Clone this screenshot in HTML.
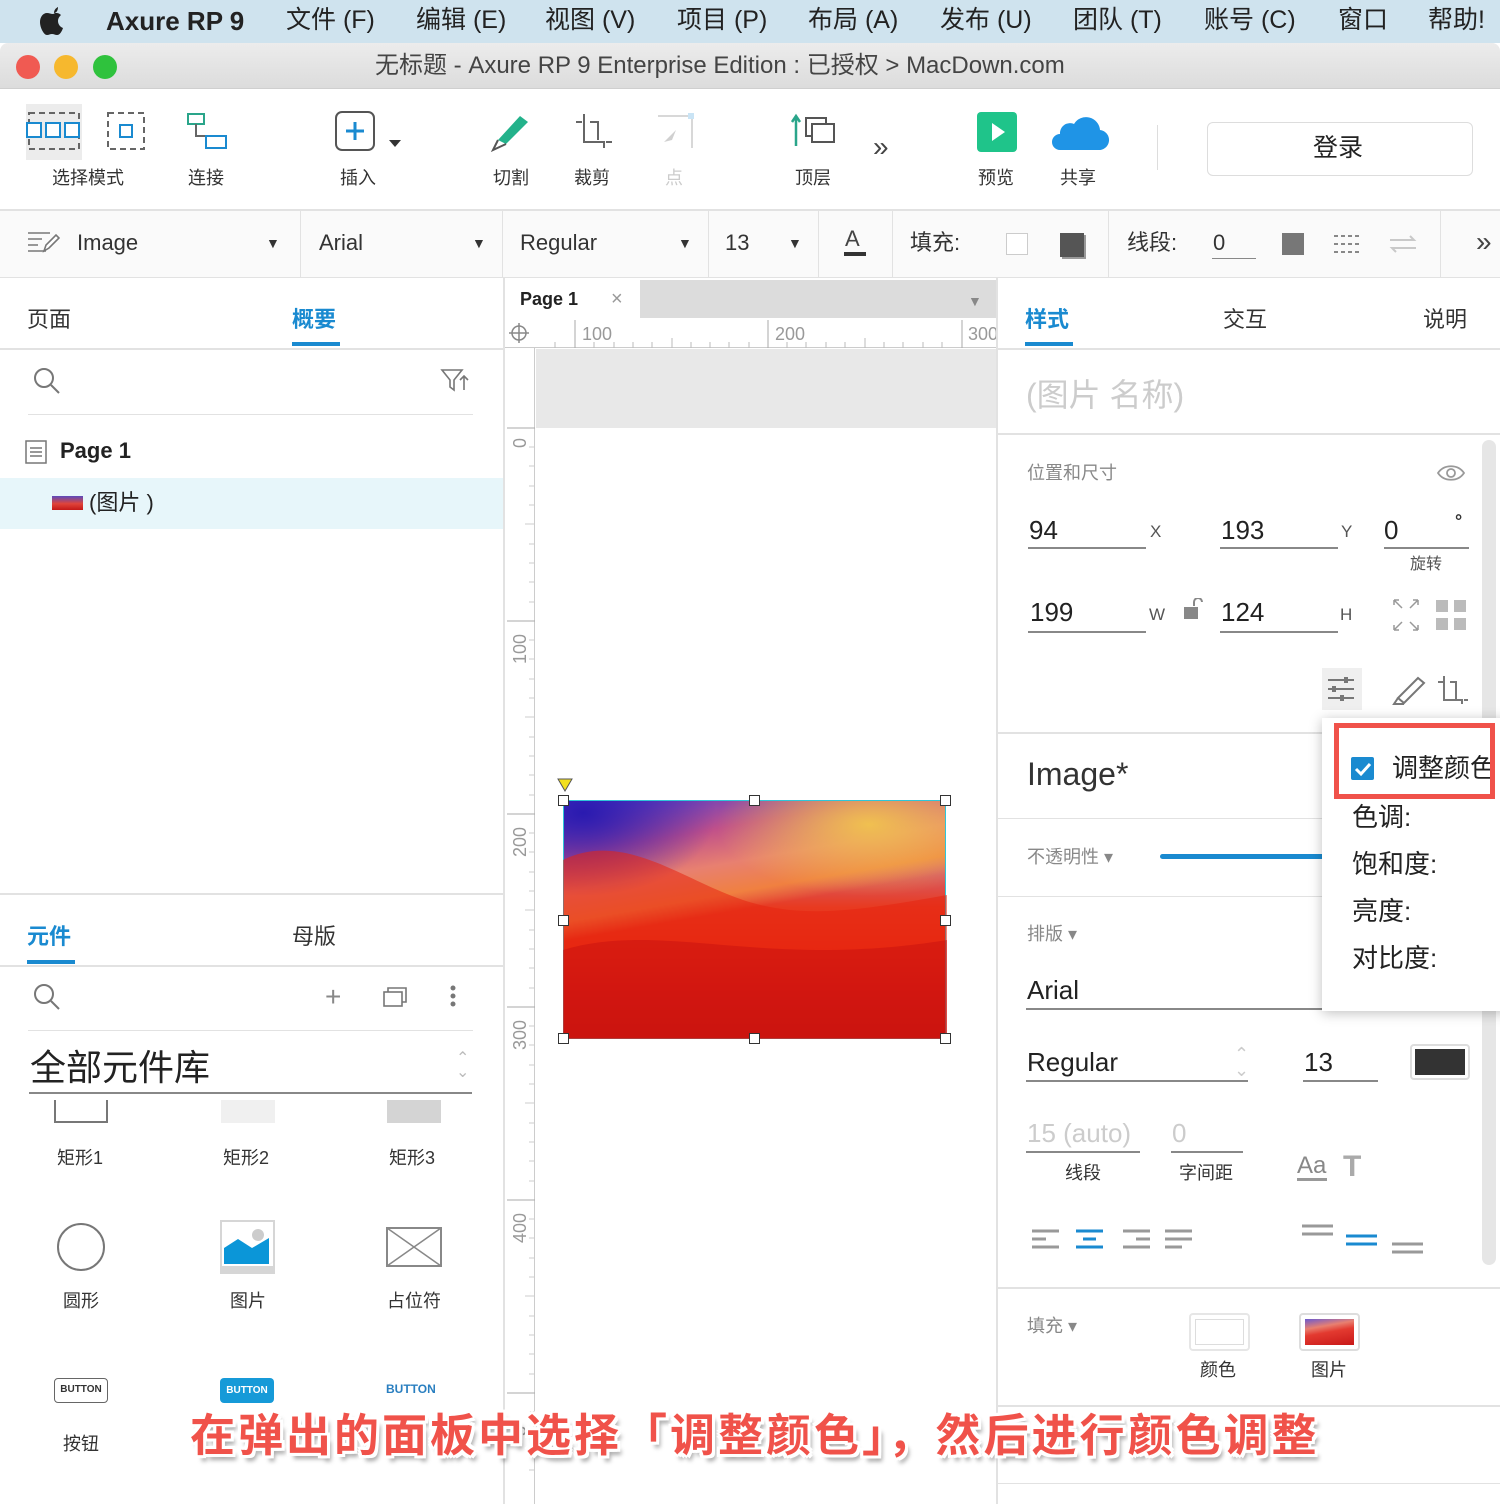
<!DOCTYPE html>
<html><head><meta charset="utf-8"><style>
*{margin:0;padding:0;box-sizing:border-box}
body{width:1500px;height:1504px;position:relative;overflow:hidden;background:#fff;font-family:"Liberation Sans","Noto Sans CJK SC",sans-serif;color:#333}
.a{position:absolute}
.t{position:absolute;white-space:nowrap;line-height:1}
.ln{position:absolute;background:#e2e2e2}
.ul{position:absolute;height:2px;background:#888}
</style></head><body>
<!-- menu bar -->
<div class="a" style="left:0;top:0;width:1500px;height:43px;background:#cfe3ee"></div>
<svg class="a" style="left:38px;top:5px" width="30" height="32" viewBox="0 0 30 32"><path d="M20 2c-2 1-4 3-4 6 2 0 4-2 4-6zM15 9c-2 0-4-1-6-1-4 0-7 4-7 9 0 6 4 13 7 13 2 0 3-1 5-1s3 1 5 1c3 0 5-4 6-7-3-1-5-4-5-7 0-3 2-5 3-6-2-2-4-2-5-2-2 0-2 1-3 1z" fill="#222"/></svg>
<div class="t" style="left:106px;top:8px;font-size:26px;font-weight:bold;color:#222">Axure RP 9</div>
<div class="t" style="left:286px;top:8px;font-size:25px;color:#222;word-spacing:0">文件 (F)</div>
<div class="t" style="left:416px;top:8px;font-size:25px;color:#222">编辑 (E)</div>
<div class="t" style="left:545px;top:8px;font-size:25px;color:#222">视图 (V)</div>
<div class="t" style="left:677px;top:8px;font-size:25px;color:#222">项目 (P)</div>
<div class="t" style="left:808px;top:8px;font-size:25px;color:#222">布局 (A)</div>
<div class="t" style="left:940px;top:8px;font-size:25px;color:#222">发布 (U)</div>
<div class="t" style="left:1073px;top:8px;font-size:25px;color:#222">团队 (T)</div>
<div class="t" style="left:1204px;top:8px;font-size:25px;color:#222">账号 (C)</div>
<div class="t" style="left:1338px;top:8px;font-size:25px;color:#222">窗口</div>
<div class="t" style="left:1428px;top:8px;font-size:25px;color:#222">帮助!</div>
<!-- title bar -->
<div class="a" style="left:0;top:43px;width:1500px;height:46px;background:linear-gradient(#ececec,#dcdcdc);border-bottom:1px solid #cfcfcf;border-radius:8px 8px 0 0"></div>
<div class="a" style="left:16px;top:55px;width:24px;height:24px;border-radius:50%;background:#f05a52"></div>
<div class="a" style="left:54px;top:55px;width:24px;height:24px;border-radius:50%;background:#f6b82e"></div>
<div class="a" style="left:93px;top:55px;width:24px;height:24px;border-radius:50%;background:#2fc23d"></div>
<div class="t" style="left:375px;top:54px;font-size:24px;color:#444">无标题 - Axure RP 9 Enterprise Edition : 已授权 &gt; MacDown.com</div>
<!-- toolbar -->
<div class="a" style="left:26px;top:104px;width:56px;height:56px;background:#ececec"></div>
<svg class="a" style="left:26px;top:110px" width="56" height="42"><rect x="3" y="3" width="50" height="36" fill="none" stroke="#666" stroke-width="2" stroke-dasharray="6 4"/><rect x="1" y="13" width="14" height="14" fill="#fff" stroke="#1a8ad0" stroke-width="2"/><rect x="20" y="13" width="14" height="14" fill="#fff" stroke="#1a8ad0" stroke-width="2"/><rect x="39" y="13" width="14" height="14" fill="#fff" stroke="#1a8ad0" stroke-width="2"/></svg>
<svg class="a" style="left:106px;top:110px" width="40" height="42"><rect x="2" y="3" width="36" height="36" fill="none" stroke="#666" stroke-width="2" stroke-dasharray="6 4"/><rect x="14" y="15" width="12" height="12" fill="none" stroke="#1a8ad0" stroke-width="2"/></svg>
<svg class="a" style="left:186px;top:112px" width="44" height="40"><rect x="2" y="2" width="16" height="10" fill="none" stroke="#2aa58a" stroke-width="2"/><path d="M10 12v12h14" fill="none" stroke="#666" stroke-width="2"/><rect x="20" y="24" width="20" height="12" fill="none" stroke="#1a8ad0" stroke-width="2"/></svg>
<div class="t" style="left:52px;top:169px;font-size:18px">选择模式</div>
<div class="t" style="left:188px;top:169px;font-size:18px">连接</div>
<svg class="a" style="left:334px;top:110px" width="70" height="44"><rect x="2" y="2" width="38" height="38" rx="6" fill="none" stroke="#555" stroke-width="2"/><path d="M21 12v18M12 21h18" stroke="#1a8ad0" stroke-width="3"/><path d="M55 30h12l-6 7z" fill="#333"/></svg>
<div class="t" style="left:340px;top:169px;font-size:18px">插入</div>
<svg class="a" style="left:490px;top:112px" width="44" height="40"><path d="M8 28 30 4l8 6-22 22z" fill="#23b28b"/><path d="M8 28l-5 10 13-6" fill="none" stroke="#555" stroke-width="2"/></svg>
<svg class="a" style="left:572px;top:112px" width="44" height="40"><path d="M12 2v28h20v6M4 10h6M18 10h8v18M34 30h6" fill="none" stroke="#666" stroke-width="2"/></svg>
<svg class="a" style="left:654px;top:112px" width="44" height="40" opacity=".45"><path d="M4 4h34v32" fill="none" stroke="#aaa" stroke-width="2"/><rect x="34" y="1" width="6" height="6" fill="#8cc4ea"/><path d="M10 30l12-12-4 10z" fill="#999"/></svg>
<div class="t" style="left:493px;top:169px;font-size:18px">切割</div>
<div class="t" style="left:574px;top:169px;font-size:18px">裁剪</div>
<div class="t" style="left:665px;top:169px;font-size:18px;color:#ccc">点</div>
<svg class="a" style="left:790px;top:112px" width="48" height="40"><path d="M6 4v30M2 10l4-6 4 6" fill="none" stroke="#2aa58a" stroke-width="2.5"/><rect x="16" y="6" width="20" height="18" fill="#fff" stroke="#555" stroke-width="2"/><rect x="22" y="12" width="22" height="18" fill="#fff" stroke="#555" stroke-width="2"/></svg>
<div class="t" style="left:795px;top:169px;font-size:18px">顶层</div>
<div class="t" style="left:873px;top:133px;font-size:28px;color:#444">»</div>
<div class="a" style="left:977px;top:112px;width:40px;height:40px;border-radius:4px;background:#1fc48a"></div>
<svg class="a" style="left:990px;top:122px" width="16" height="20"><path d="M2 1l13 9-13 9z" fill="#fff"/></svg>
<svg class="a" style="left:1046px;top:110px" width="64" height="44"><path d="M14 40h38a10 10 0 0 0 2-20 14 14 0 0 0-26-6 10 10 0 0 0-14 10 8 8 0 0 0 0 16z" fill="#1f94e6"/></svg>
<div class="t" style="left:978px;top:169px;font-size:18px">预览</div>
<div class="t" style="left:1060px;top:169px;font-size:18px">共享</div>
<div class="a" style="left:1157px;top:125px;width:1px;height:45px;background:#ddd"></div>
<div class="a" style="left:1207px;top:122px;width:266px;height:54px;border:1px solid #ddd;border-radius:6px"></div>
<div class="t" style="left:1313px;top:136px;font-size:25px;color:#222">登录</div>
<!-- format bar -->
<div class="ln" style="left:0;top:209px;width:1500px;height:2px"></div>
<div class="a" style="left:0;top:211px;width:1500px;height:67px;background:#fafafa"></div>
<div class="ln" style="left:0;top:277px;width:1500px;height:1px"></div>
<svg class="a" style="left:26px;top:229px" width="34" height="28"><path d="M2 4h22M2 10h14M2 16h10M2 22h18" stroke="#777" stroke-width="1.6"/><path d="M18 22l2-6 10-10 3 3-10 10z" fill="#fff" stroke="#777" stroke-width="1.6"/></svg>
<div class="t" style="left:77px;top:232px;font-size:22px">Image</div>
<div class="t" style="left:266px;top:236px;font-size:14px">▼</div>
<div class="a" style="left:300px;top:211px;width:1px;height:66px;background:#e2e2e2"></div>
<div class="t" style="left:319px;top:232px;font-size:22px">Arial</div>
<div class="t" style="left:472px;top:236px;font-size:14px">▼</div>
<div class="a" style="left:502px;top:211px;width:1px;height:66px;background:#e2e2e2"></div>
<div class="t" style="left:520px;top:232px;font-size:22px">Regular</div>
<div class="t" style="left:678px;top:236px;font-size:14px">▼</div>
<div class="a" style="left:708px;top:211px;width:1px;height:66px;background:#e2e2e2"></div>
<div class="t" style="left:725px;top:232px;font-size:22px">13</div>
<div class="t" style="left:788px;top:236px;font-size:14px">▼</div>
<div class="a" style="left:818px;top:211px;width:1px;height:66px;background:#e2e2e2"></div>
<div class="t" style="left:845px;top:228px;font-size:22px;color:#444">A</div>
<div class="a" style="left:844px;top:252px;width:22px;height:4px;background:#333"></div>
<div class="a" style="left:892px;top:211px;width:1px;height:66px;background:#e2e2e2"></div>
<div class="t" style="left:910px;top:232px;font-size:22px">填充:</div>
<div class="a" style="left:1006px;top:233px;width:22px;height:22px;border:1px solid #ccc;background:#fff"></div>
<div class="a" style="left:1060px;top:233px;width:24px;height:24px;background:#555;box-shadow:2px 2px 0 #999"></div>
<div class="a" style="left:1108px;top:211px;width:1px;height:66px;background:#e2e2e2"></div>
<div class="t" style="left:1127px;top:232px;font-size:22px">线段:</div>
<div class="t" style="left:1213px;top:232px;font-size:22px">0</div>
<div class="ul" style="left:1212px;top:258px;width:44px;height:1px"></div>
<div class="a" style="left:1282px;top:233px;width:22px;height:22px;background:#777"></div>
<svg class="a" style="left:1332px;top:232px" width="30" height="24"><path d="M2 4h26M2 12h26M2 20h26" stroke="#888" stroke-width="2" stroke-dasharray="4 3"/></svg>
<svg class="a" style="left:1388px;top:232px" width="30" height="24" opacity=".5"><path d="M2 8h24l-4-4M28 16H4l4 4" fill="none" stroke="#999" stroke-width="2"/></svg>
<div class="a" style="left:1440px;top:211px;width:1px;height:66px;background:#e2e2e2"></div>
<div class="t" style="left:1476px;top:228px;font-size:28px;color:#444">»</div>
<!-- left panel -->
<div class="a" style="left:503px;top:278px;width:2px;height:1226px;background:#e2e2e2"></div>
<div class="t" style="left:27px;top:309px;font-size:22px">页面</div>
<div class="t" style="left:292px;top:309px;font-size:22px;color:#1a8ad0;font-weight:bold">概要</div>
<div class="a" style="left:292px;top:342px;width:48px;height:4px;background:#1a8ad0"></div>
<div class="ln" style="left:0;top:348px;width:503px;height:2px"></div>
<svg class="a" style="left:32px;top:366px" width="30" height="30"><circle cx="12" cy="12" r="9" fill="none" stroke="#777" stroke-width="2"/><path d="M19 19l8 8" stroke="#777" stroke-width="2"/></svg>
<svg class="a" style="left:440px;top:368px" width="30" height="26"><path d="M2 2h20l-8 10v10l-4-3v-7z" fill="none" stroke="#777" stroke-width="1.6"/><path d="M24 22V8M20 12l4-4 4 4" fill="none" stroke="#777" stroke-width="1.6"/></svg>
<div class="ln" style="left:28px;top:414px;width:445px;height:1px"></div>
<svg class="a" style="left:25px;top:440px" width="22" height="24"><rect x="1" y="1" width="20" height="22" fill="none" stroke="#777" stroke-width="1.5"/><path d="M5 8h12M5 12h12M5 16h12" stroke="#777" stroke-width="1.5"/></svg>
<div class="t" style="left:60px;top:440px;font-size:22px;font-weight:bold;color:#222">Page 1</div>
<div class="a" style="left:0;top:478px;width:503px;height:51px;background:#e7f6fa"></div>
<div class="a" style="left:52px;top:496px;width:31px;height:14px;background:linear-gradient(#5b4bbd,#e0443a 55%,#c41818)"></div>
<div class="t" style="left:89px;top:492px;font-size:22px;color:#222">(图片 )</div>
<div class="ln" style="left:0;top:893px;width:503px;height:2px"></div>
<div class="t" style="left:27px;top:926px;font-size:22px;color:#1a8ad0;font-weight:bold">元件</div>
<div class="a" style="left:27px;top:960px;width:48px;height:4px;background:#1a8ad0"></div>
<div class="t" style="left:292px;top:926px;font-size:22px">母版</div>
<div class="ln" style="left:0;top:965px;width:503px;height:2px"></div>
<svg class="a" style="left:32px;top:982px" width="30" height="30"><circle cx="12" cy="12" r="9" fill="none" stroke="#777" stroke-width="2"/><path d="M19 19l8 8" stroke="#777" stroke-width="2"/></svg>
<div class="t" style="left:325px;top:983px;font-size:28px;color:#888;font-weight:300">+</div>
<svg class="a" style="left:382px;top:984px" width="30" height="24"><rect x="2" y="8" width="18" height="14" fill="none" stroke="#777" stroke-width="1.6"/><path d="M6 8V4h18v14h-4" fill="none" stroke="#777" stroke-width="1.6"/></svg>
<svg class="a" style="left:448px;top:984px" width="10" height="26"><circle cx="5" cy="4" r="2.5" fill="#777"/><circle cx="5" cy="12" r="2.5" fill="#777"/><circle cx="5" cy="20" r="2.5" fill="#777"/></svg>
<div class="ln" style="left:28px;top:1030px;width:445px;height:1px"></div>
<div class="t" style="left:30px;top:1050px;font-size:36px;color:#222">全部元件库</div>
<div class="t" style="left:456px;top:1052px;font-size:16px;color:#bbb;line-height:.9">⌃<br>⌄</div>
<div class="ul" style="left:29px;top:1092px;width:443px"></div>
<div class="a" style="left:54px;top:1100px;width:54px;height:23px;border:2px solid #777;border-top:none"></div>
<div class="a" style="left:221px;top:1100px;width:54px;height:23px;background:#f0f0f0"></div>
<div class="a" style="left:387px;top:1100px;width:54px;height:23px;background:#d4d4d4"></div>
<div class="t" style="left:57px;top:1149px;font-size:18px">矩形1</div>
<div class="t" style="left:223px;top:1149px;font-size:18px">矩形2</div>
<div class="t" style="left:389px;top:1149px;font-size:18px">矩形3</div>
<div class="a" style="left:57px;top:1223px;width:48px;height:48px;border:2px solid #777;border-radius:50%"></div>
<div class="a" style="left:220px;top:1220px;width:55px;height:54px;background:#d6d6d6"></div>
<svg class="a" style="left:222px;top:1222px" width="51" height="44"><rect width="51" height="44" fill="#fff"/><path d="M2 42V26l14-9 14 9 17-10v26z" fill="#0b96d8"/><circle cx="36" cy="13" r="6" fill="#ccc"/></svg>
<svg class="a" style="left:386px;top:1227px" width="56" height="40"><rect x="1" y="1" width="54" height="38" fill="none" stroke="#888" stroke-width="2"/><path d="M1 1l54 38M55 1 1 39" stroke="#888" stroke-width="1.5"/></svg>
<div class="t" style="left:63px;top:1292px;font-size:18px">圆形</div>
<div class="t" style="left:230px;top:1292px;font-size:18px">图片</div>
<div class="t" style="left:387px;top:1292px;font-size:18px">占位符</div>
<div class="a" style="left:54px;top:1378px;width:54px;height:25px;border:1.5px solid #666;border-radius:4px;font-size:10px;font-weight:bold;text-align:center;line-height:22px">BUTTON</div>
<div class="a" style="left:220px;top:1378px;width:54px;height:25px;background:#169ad8;border-radius:4px;font-size:10px;font-weight:bold;color:#fff;text-align:center;line-height:25px">BUTTON</div>
<div class="t" style="left:386px;top:1383px;font-size:12px;font-weight:bold;color:#2a7fc0">BUTTON</div>
<div class="t" style="left:63px;top:1435px;font-size:18px">按钮</div>
<!-- canvas -->
<div class="a" style="left:505px;top:280px;width:492px;height:38px;background:#dcdcdc"></div>
<div class="a" style="left:505px;top:280px;width:135px;height:38px;background:#fff"></div>
<div class="t" style="left:520px;top:290px;font-size:18px;font-weight:bold;color:#222">Page 1</div>
<div class="t" style="left:611px;top:289px;font-size:20px;color:#999">×</div>
<div class="t" style="left:968px;top:294px;font-size:14px;color:#888">▼</div>
<div class="a" style="left:505px;top:318px;width:492px;height:30px;background:#fff;border-bottom:1px solid #ccc"></div>
<svg class="a" style="left:505px;top:318px" width="492" height="30"><circle cx="14" cy="15" r="7" fill="none" stroke="#888" stroke-width="1.5"/><path d="M14 5v20M4 15h20" stroke="#888" stroke-width="1.5"/><path d="M70 2v28M263 2v28M457 2v28" stroke="#aaa" stroke-width="1"/><g stroke="#bbb"><path d="M50 24v6M89 24v6M109 24v6M128 24v6M147 24v6M167 20v10M186 24v6M205 24v6M224 24v6M244 24v6M282 24v6M301 24v6M321 24v6M340 24v6M360 20v10M379 24v6M398 24v6M418 24v6M437 24v6"/></g><text x="77" y="22" font-size="18" fill="#999" font-family="Liberation Sans">100</text><text x="270" y="22" font-size="18" fill="#999" font-family="Liberation Sans">200</text><text x="463" y="22" font-size="18" fill="#999" font-family="Liberation Sans">300</text></svg>
<div class="a" style="left:505px;top:348px;width:30px;height:1156px;background:#fff;border-right:1px solid #ccc"></div>
<svg class="a" style="left:505px;top:348px" width="30" height="1156"><g stroke="#aaa"><path d="M2 80h28M2 273h28M2 466h28M2 659h28M2 852h28M2 1045h28"/></g><g stroke="#ccc"><path d="M24 99h6M24 118h6M24 138h6M24 157h6M20 176h10M24 196h6M24 215h6M24 234h6M24 254h6M24 292h6M24 311h6M24 331h6M24 350h6M20 369h10M24 389h6M24 408h6M24 427h6M24 447h6M24 485h6M24 504h6M24 524h6M24 543h6M20 562h10M24 582h6M24 601h6M24 620h6M24 640h6M24 678h6M24 697h6M24 717h6M24 736h6M20 755h10M24 775h6M24 794h6M24 813h6M24 833h6M24 871h6M24 890h6M24 910h6M24 929h6M20 948h10M24 968h6M24 987h6M24 1006h6M24 1026h6M24 1064h6M24 1083h6M24 1103h6M24 1122h6"/></g><g font-size="18" fill="#999" font-family="Liberation Sans"><text transform="translate(21 86) rotate(-90)" x="-14">0</text><text transform="translate(21 316) rotate(-90)">100</text><text transform="translate(21 509) rotate(-90)">200</text><text transform="translate(21 702) rotate(-90)">300</text><text transform="translate(21 895) rotate(-90)">400</text><text transform="translate(21 1088) rotate(-90)">5</text></g></svg>
<div class="a" style="left:536px;top:349px;width:461px;height:79px;background:#e8e8e8"></div>
<div class="a" style="left:563px;top:800px;width:383px;height:239px;border:1px solid #2fc6d8;background:
radial-gradient(ellipse 40% 30% at 80% 10%,#f0c050,transparent),
radial-gradient(ellipse 35% 35% at 5% 5%,#2a1ab0,transparent),
linear-gradient(170deg,#4b3fd0 0%,#c0508a 18%,#e88070 30%,#f08040 40%,transparent 46%),
linear-gradient(180deg,#6a5ad8 0%,#d06a80 25%,#e83a20 45%,#e82a10 65%,#c81010 85%,#b00c0c 100%)"></div>
<svg class="a" style="left:563px;top:800px" width="384" height="239"><path d="M0 60C60 30 120 80 180 100S300 110 384 95V239H0z" fill="#e62410" opacity=".55"/><path d="M0 150C100 120 200 170 384 140V239H0z" fill="#c81010" opacity=".5"/></svg>
<svg class="a" style="left:557px;top:778px" width="16" height="14"><path d="M1 1h14L8 13z" fill="#f2e020" stroke="#555"/></svg>
<div class="a" style="left:558px;top:795px;width:11px;height:11px;border:1.5px solid #333;background:#fff"></div>
<div class="a" style="left:749px;top:795px;width:11px;height:11px;border:1.5px solid #333;background:#fff"></div>
<div class="a" style="left:940px;top:795px;width:11px;height:11px;border:1.5px solid #333;background:#fff"></div>
<div class="a" style="left:558px;top:915px;width:11px;height:11px;border:1.5px solid #333;background:#fff"></div>
<div class="a" style="left:940px;top:915px;width:11px;height:11px;border:1.5px solid #333;background:#fff"></div>
<div class="a" style="left:558px;top:1033px;width:11px;height:11px;border:1.5px solid #333;background:#fff"></div>
<div class="a" style="left:749px;top:1033px;width:11px;height:11px;border:1.5px solid #333;background:#fff"></div>
<div class="a" style="left:940px;top:1033px;width:11px;height:11px;border:1.5px solid #333;background:#fff"></div>
<!-- right panel -->
<div class="a" style="left:996px;top:278px;width:2px;height:1226px;background:#e2e2e2"></div>
<div class="t" style="left:1025px;top:309px;font-size:22px;color:#1a8ad0;font-weight:bold">样式</div>
<div class="a" style="left:1025px;top:342px;width:48px;height:4px;background:#1a8ad0"></div>
<div class="t" style="left:1223px;top:309px;font-size:22px">交互</div>
<div class="t" style="left:1423px;top:309px;font-size:22px">说明</div>
<div class="ln" style="left:998px;top:348px;width:502px;height:2px"></div>
<div class="t" style="left:1026px;top:379px;font-size:32px;color:#ccc">(图片 名称)</div>
<div class="ln" style="left:998px;top:433px;width:502px;height:2px"></div>
<div class="a" style="left:1482px;top:440px;width:14px;height:825px;background:#e6e6e6;border-radius:7px"></div>
<div class="t" style="left:1027px;top:464px;font-size:18px;color:#888">位置和尺寸</div>
<svg class="a" style="left:1436px;top:462px" width="30" height="22"><path d="M2 11C8 2 22 2 28 11 22 20 8 20 2 11z" fill="none" stroke="#999" stroke-width="1.8"/><circle cx="15" cy="11" r="4" fill="none" stroke="#999" stroke-width="1.8"/></svg>
<div class="t" style="left:1029px;top:517px;font-size:26px;color:#222">94</div>
<div class="ul" style="left:1028px;top:547px;width:118px;height:1.5px"></div>
<div class="t" style="left:1150px;top:523px;font-size:17px;color:#555">X</div>
<div class="t" style="left:1221px;top:517px;font-size:26px;color:#222">193</div>
<div class="ul" style="left:1220px;top:547px;width:118px;height:1.5px"></div>
<div class="t" style="left:1341px;top:523px;font-size:17px;color:#555">Y</div>
<div class="t" style="left:1384px;top:517px;font-size:26px;color:#222">0</div>
<div class="t" style="left:1455px;top:512px;font-size:18px;font-weight:bold;color:#333">°</div>
<div class="ul" style="left:1384px;top:547px;width:85px;height:1.5px"></div>
<div class="t" style="left:1410px;top:557px;font-size:16px;color:#555">旋转</div>
<div class="t" style="left:1030px;top:599px;font-size:26px;color:#222">199</div>
<div class="ul" style="left:1028px;top:631px;width:118px;height:1.5px"></div>
<div class="t" style="left:1149px;top:606px;font-size:17px;color:#555">W</div>
<svg class="a" style="left:1183px;top:598px" width="20" height="24"><path d="M11 8V4a4 4 0 0 1 8 0" fill="none" stroke="#888" stroke-width="2"/><rect x="1" y="9" width="14" height="12" fill="#888"/></svg>
<div class="t" style="left:1221px;top:599px;font-size:26px;color:#222">124</div>
<div class="ul" style="left:1220px;top:631px;width:118px;height:1.5px"></div>
<div class="t" style="left:1340px;top:606px;font-size:17px;color:#555">H</div>
<svg class="a" style="left:1392px;top:598px" width="80" height="34"><g stroke="#999" stroke-width="1.5" fill="none"><path d="M2 2l8 8M2 2h5M2 2v5M26 2l-8 8M26 2h-5M26 2v5M2 32l8-8M2 32h5M2 32v-5M26 32l-8-8M26 32h-5M26 32v-5"/></g><g fill="#bbb"><rect x="44" y="2" width="12" height="12"/><rect x="62" y="2" width="12" height="12"/><rect x="44" y="20" width="12" height="12"/><rect x="62" y="20" width="12" height="12"/></g></svg>
<div class="a" style="left:1322px;top:668px;width:40px;height:42px;background:#efefef"></div>
<svg class="a" style="left:1326px;top:676px" width="32" height="28"><path d="M2 4h26M2 13h26M2 22h26" stroke="#777" stroke-width="2"/><rect x="18" y="1" width="4" height="6" fill="#777"/><rect x="6" y="10" width="4" height="6" fill="#777"/><rect x="14" y="19" width="4" height="6" fill="#777"/></svg>
<svg class="a" style="left:1392px;top:674px" width="36" height="32"><path d="M6 24 26 4l6 5-20 20z" fill="none" stroke="#777" stroke-width="2"/><path d="M6 24l-4 6h10" fill="none" stroke="#777" stroke-width="2"/></svg>
<svg class="a" style="left:1436px;top:674px" width="34" height="32"><path d="M8 2v24h18v4M2 8h6M14 8h6v18M28 26h4" fill="none" stroke="#777" stroke-width="2"/></svg>
<div class="ln" style="left:998px;top:732px;width:330px;height:2px"></div>
<div class="t" style="left:1027px;top:758px;font-size:32px;color:#333">Image*</div>
<div class="ln" style="left:998px;top:818px;width:330px;height:1px"></div>
<div class="t" style="left:1027px;top:848px;font-size:18px;color:#888">不透明性 ▾</div>
<div class="a" style="left:1160px;top:854px;width:165px;height:5px;border-radius:3px;background:#1a8ad0"></div>
<div class="ln" style="left:998px;top:896px;width:330px;height:1px"></div>
<div class="t" style="left:1027px;top:925px;font-size:18px;color:#888">排版 ▾</div>
<div class="t" style="left:1027px;top:977px;font-size:26px;color:#222">Arial</div>
<div class="ul" style="left:1026px;top:1008px;width:300px;height:1.5px"></div>
<div class="t" style="left:1027px;top:1049px;font-size:26px;color:#222">Regular</div>
<div class="t" style="left:1234px;top:1046px;font-size:18px;color:#ccc;line-height:.9">⌃<br>⌄</div>
<div class="ul" style="left:1026px;top:1080px;width:222px;height:1.5px"></div>
<div class="t" style="left:1304px;top:1049px;font-size:26px;color:#222">13</div>
<div class="ul" style="left:1303px;top:1080px;width:75px;height:1.5px"></div>
<div class="a" style="left:1410px;top:1044px;width:60px;height:36px;border:2px solid #ddd;border-radius:4px;padding:3px"><div style="width:100%;height:100%;background:#333"></div></div>
<div class="t" style="left:1027px;top:1120px;font-size:26px;color:#ccc">15 (auto)</div>
<div class="ul" style="left:1026px;top:1151px;width:114px;height:1.5px"></div>
<div class="t" style="left:1172px;top:1120px;font-size:26px;color:#ccc">0</div>
<div class="ul" style="left:1171px;top:1151px;width:72px;height:1.5px"></div>
<div class="t" style="left:1065px;top:1164px;font-size:18px">线段</div>
<div class="t" style="left:1179px;top:1164px;font-size:18px">字间距</div>
<div class="t" style="left:1297px;top:1154px;font-size:24px;color:#888">Aa</div>
<div class="a" style="left:1297px;top:1178px;width:30px;height:3px;background:#999"></div>
<div class="t" style="left:1343px;top:1152px;font-size:30px;color:#aaa;font-weight:bold">T</div>
<svg class="a" style="left:1030px;top:1228px" width="180" height="24"><g stroke-width="3"><path d="M2 3h27M2 11h14M2 19h27" stroke="#999"/><path d="M46 3h27M53 11h13M46 19h27" stroke="#1a8ad0"/><path d="M93 3h27M106 11h14M93 19h27" stroke="#999"/><path d="M135 3h27M135 11h27M135 19h17" stroke="#999"/></g></svg>
<svg class="a" style="left:1300px;top:1222px" width="130" height="34"><g stroke-width="3"><path d="M2 4h31M2 12h31" stroke="#999"/><path d="M46 14h31M46 22h31" stroke="#1a8ad0"/><path d="M92 22h31M92 30h31" stroke="#999"/></g></svg>
<div class="ln" style="left:998px;top:1287px;width:502px;height:2px"></div>
<div class="t" style="left:1027px;top:1317px;font-size:18px;color:#888">填充 ▾</div>
<div class="a" style="left:1189px;top:1313px;width:61px;height:38px;border:2px solid #e6e6e6;border-radius:4px;padding:4px"><div style="width:100%;height:100%;border:1.5px solid #ddd"></div></div>
<div class="a" style="left:1299px;top:1313px;width:61px;height:38px;border:2px solid #ddd;border-radius:4px;padding:4px"><div style="width:100%;height:100%;background:linear-gradient(170deg,#6a5ad0,#e88070 30%,#e33a30 50%,#c81818)"></div></div>
<div class="t" style="left:1200px;top:1361px;font-size:18px">颜色</div>
<div class="t" style="left:1311px;top:1361px;font-size:18px">图片</div>
<div class="ln" style="left:998px;top:1405px;width:502px;height:2px"></div>
<div class="ln" style="left:998px;top:1483px;width:502px;height:1px"></div>
<!-- popup -->
<div class="a" style="left:1322px;top:718px;width:190px;height:293px;background:#fff;box-shadow:0 2px 12px rgba(0,0,0,.25)"></div>
<div class="a" style="left:1334px;top:723px;width:161px;height:76px;border:5px solid #f0524a"></div>
<div class="a" style="left:1351px;top:757px;width:23px;height:23px;background:#1a8ad0;border-radius:2px"></div>
<svg class="a" style="left:1353px;top:759px" width="20" height="20"><path d="M3 10l5 5 9-10" fill="none" stroke="#fff" stroke-width="3"/></svg>
<div class="t" style="left:1392px;top:755px;font-size:26px;color:#222;width:98px;overflow:hidden">调整颜色</div>
<div class="t" style="left:1352px;top:804px;font-size:26px;color:#222">色调:</div>
<div class="t" style="left:1352px;top:851px;font-size:26px;color:#222">饱和度:</div>
<div class="t" style="left:1352px;top:898px;font-size:26px;color:#222">亮度:</div>
<div class="t" style="left:1352px;top:945px;font-size:26px;color:#222">对比度:</div>
<!-- caption -->
<div class="t" style="left:190px;top:1413px;font-size:45px;font-weight:bold;color:#f0524a;letter-spacing:3px;text-shadow:-3px -3px 0 #fff,3px -3px 0 #fff,-3px 3px 0 #fff,3px 3px 0 #fff,0 3px 0 #fff,0 -3px 0 #fff,3px 0 0 #fff,-3px 0 0 #fff,4px 6px 4px rgba(0,0,0,.35)">在弹出的面板中选择「调整颜色」，然后进行颜色调整</div>
</body></html>
